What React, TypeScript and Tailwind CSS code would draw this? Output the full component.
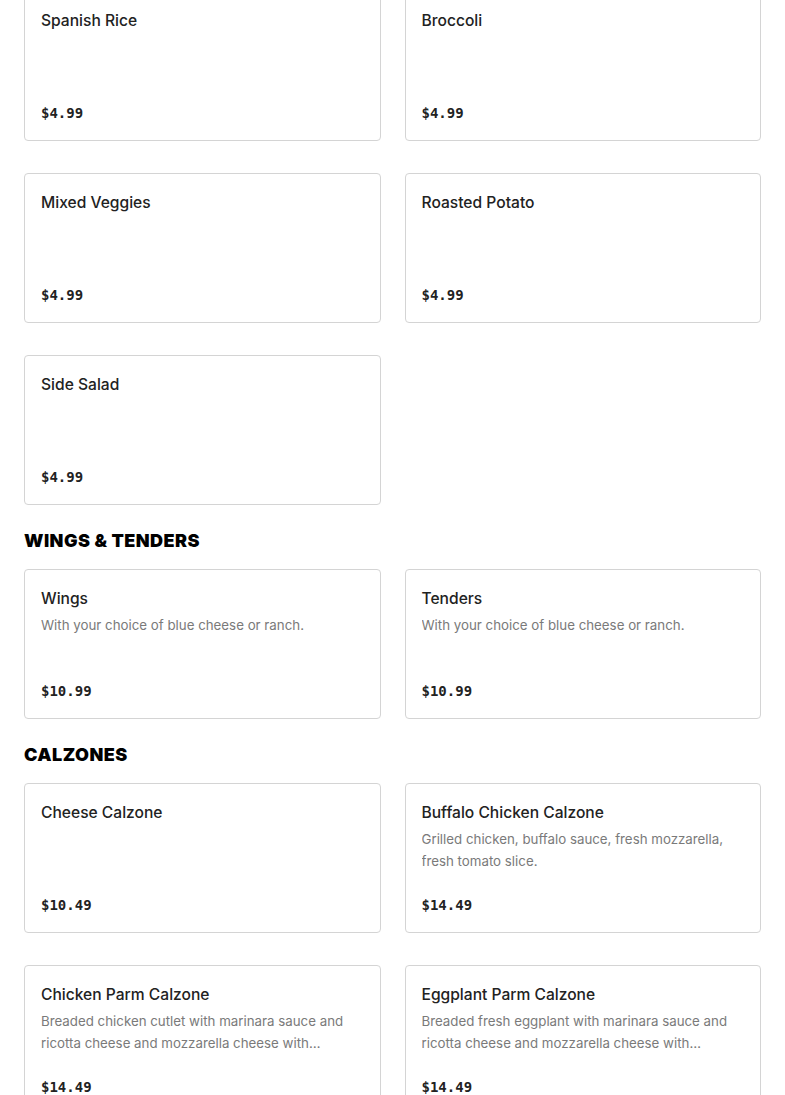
import React from 'react'

type Item = { name: string; desc?: string; price: string }

const sides: Item[] = [
  { name: 'Spanish Rice', price: '$4.99' },
  { name: 'Broccoli', price: '$4.99' },
  { name: 'Mixed Veggies', price: '$4.99' },
  { name: 'Roasted Potato', price: '$4.99' },
  { name: 'Side Salad', price: '$4.99' },
]

const wings: Item[] = [
  { name: 'Wings', desc: 'With your choice of blue cheese or ranch.', price: '$10.99' },
  { name: 'Tenders', desc: 'With your choice of blue cheese or ranch.', price: '$10.99' },
]

const calzones: Item[] = [
  { name: 'Cheese Calzone', price: '$10.49' },
  {
    name: 'Buffalo Chicken Calzone',
    desc: 'Grilled chicken, buffalo sauce, fresh mozzarella, fresh tomato slice.',
    price: '$14.49',
  },
  {
    name: 'Chicken Parm Calzone',
    desc: 'Breaded chicken cutlet with marinara sauce and ricotta cheese and mozzarella cheese with\u2026',
    price: '$14.49',
  },
  {
    name: 'Eggplant Parm Calzone',
    desc: 'Breaded fresh eggplant with marinara sauce and ricotta cheese and mozzarella cheese with\u2026',
    price: '$14.49',
  },
]

function MenuCard({ item }: { item: Item }) {
  return (
    <div className="flex h-[150px] flex-col rounded-[4px] border border-[#d4d4d4] bg-white px-4 pt-[17px] pb-4">
      <div className="text-[15.6px] font-medium leading-6 text-[#222]">{item.name}</div>
      {item.desc && (
        <p className="mt-[3px] line-clamp-2 text-[13.3px] leading-[22px] text-[#7a7a7a]">{item.desc}</p>
      )}
      <div className="mt-auto font-['DejaVu_Sans_Mono',monospace] text-[14px] font-bold leading-[22px] text-[#222]">
        {item.price}
      </div>
    </div>
  )
}

function Section({ title, items }: { title?: string; items: Item[] }) {
  return (
    <div>
      {title && (
        <h2 className="mt-6 mb-4 text-[18px] font-black uppercase leading-6 tracking-[0.025em] text-black">
          {title}
        </h2>
      )}
      <div className="grid grid-cols-2 gap-x-6 gap-y-8">
        {items.map((item) => (
          <MenuCard key={item.name} item={item} />
        ))}
      </div>
    </div>
  )
}

export default function App() {
  return (
    <div className="min-h-screen bg-white font-['Inter',sans-serif]">
      <div className="-mt-[9px] px-6 pb-10">
        <Section items={sides} />
        <Section title="Wings & Tenders" items={wings} />
        <Section title="Calzones" items={calzones} />
      </div>
    </div>
  )
}
